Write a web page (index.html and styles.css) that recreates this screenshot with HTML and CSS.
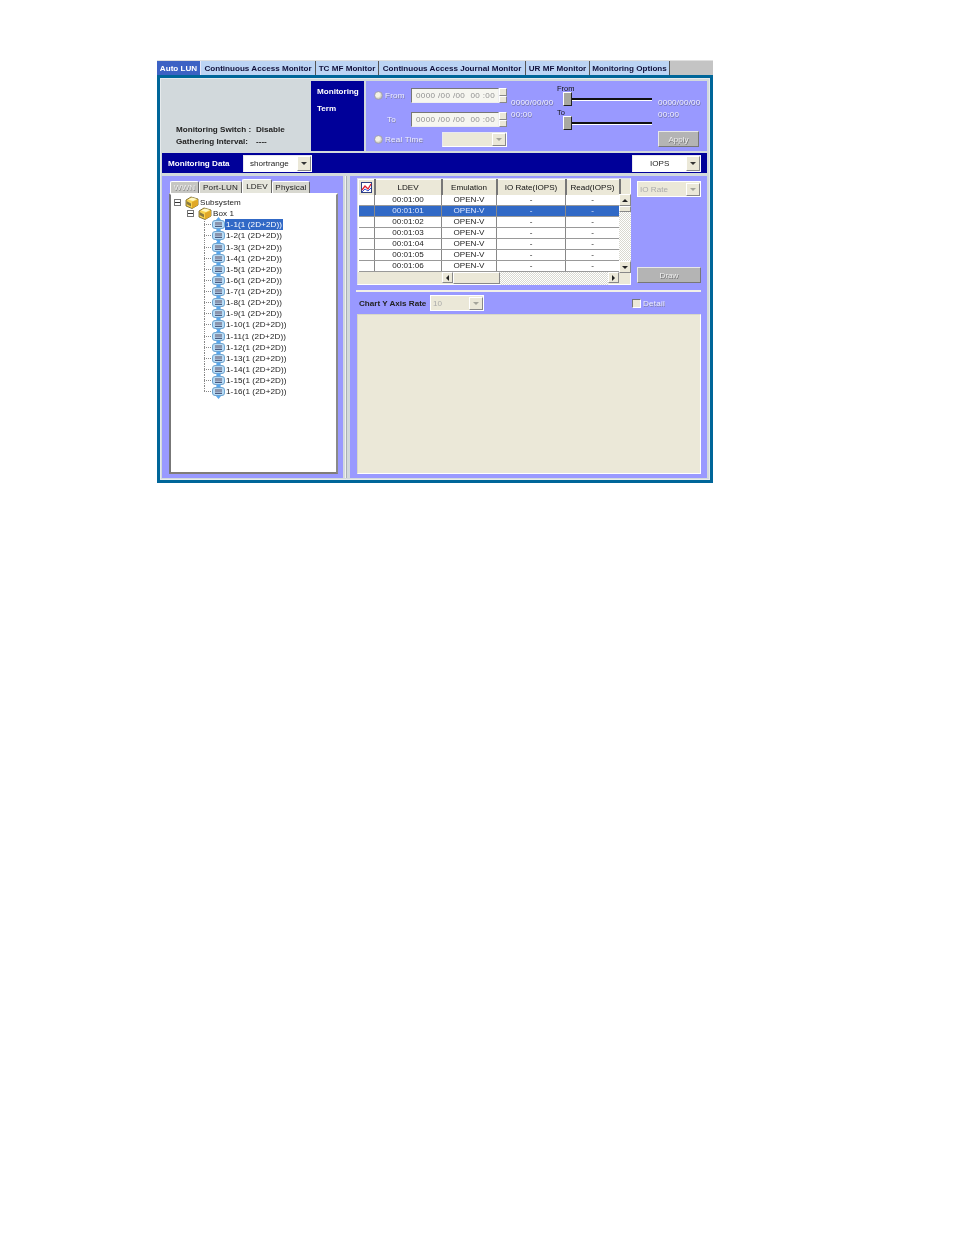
FILE: index.html
```html
<!DOCTYPE html>
<html lang="en">
<head>
<meta charset="utf-8">
<title>Auto LUN</title>
<link rel="stylesheet" href="styles.css">
</head>
<body>
<svg class="defs" width="0" height="0" aria-hidden="true">
  <symbol id="ldev" viewBox="0 0 13 15">
    <path d="M6.500 0 9.500 3.500H3.500ZM6.500 15 3.500 11.500H9.500Z" fill="#5aa8ee"/>
    <rect x=".5" y="3.500" width="12" height="8" rx="2.500" fill="#b8dcf6" stroke="#6ea4d0"/>
    <rect x="3" y="5" width="7" height="3.500" fill="#8a94ac"/>
    <rect x="3" y="9" width="7" height="1" fill="#4a5a80"/>
  </symbol>
  <symbol id="folder" viewBox="0 0 14 13">
    <path d="M1 4 6 1l7 2v6l-6 3.500L1 10Z" fill="#f6d24e" stroke="#6a5a20" stroke-width=".8"/>
    <path d="M3 3.500 7 1.500l5 1.500-4 2Z" fill="#fff8c4"/>
    <path d="M7 6l6-2.500v5.500l-6 3.500Z" fill="#e0a828"/>
    <path d="M1.500 5 6 7.500v3L1.500 8Z" fill="#8a7a40"/>
  </symbol>
</svg>
<main class="app">
  <nav class="tabs">
    <span class="tab tab-active tw-43">Auto LUN</span>
    <span class="tab tw-115">Continuous Access Monitor</span>
    <span class="tab tw-63">TC MF Monitor</span>
    <span class="tab tw-147">Continuous Access Journal Monitor</span>
    <span class="tab tw-64">UR MF Monitor</span>
    <span class="tab tw-80">Monitoring Options</span>
  </nav>
  <div class="frame">
    <section class="top">
      <div class="status">
        <div class="status-row"><span class="status-key">Monitoring Switch :</span><span>Disable</span></div>
        <div class="status-row"><span class="status-key">Gathering Interval:</span><span>----</span></div>
      </div>
      <div class="term"><span>Monitoring</span><span>Term</span></div>
      <div class="range">
        <div class="range-inputs">
          <div class="range-row">
            <span class="radio"></span><span class="muted label-from">From</span>
            <span class="field">0000 /00 /00&nbsp; 00 :00</span><span class="spin"><i></i><i></i></span>
          </div>
          <div class="range-row range-row-to">
            <span class="muted label-to">To</span>
            <span class="field">0000 /00 /00&nbsp; 00 :00</span><span class="spin"><i></i><i></i></span>
          </div>
          <div class="range-row range-row-rt">
            <span class="radio"></span><span class="muted label-rt">Real Time</span>
            <span class="combo combo-rt"><span class="combo-text"></span><span class="arrow arrow-off"></span></span>
          </div>
        </div>
        <div class="stamp"><span>0000/00/00</span><span>00:00</span></div>
        <div class="sliders">
          <span class="slider-label">From</span>
          <div class="slider"><span class="thumb"></span><span class="track"></span></div>
          <span class="slider-label slider-label-to">To</span>
          <div class="slider"><span class="thumb"></span><span class="track"></span></div>
        </div>
        <div class="range-end">
          <div class="stamp stamp-end"><span>0000/00/00</span><span>00:00</span></div>
          <span class="btn btn-apply">Apply</span>
        </div>
      </div>
    </section>

    <section class="databar">
      <span class="databar-title">Monitoring Data</span>
      <span class="combo combo-data"><span class="combo-text">shortrange</span><span class="arrow"></span></span>
      <span class="combo combo-iops"><span class="combo-text">IOPS</span><span class="arrow"></span></span>
    </section>

    <section class="lower">
      <div class="left">
        <div class="subtabs">
          <span class="subtab subtab-off sw-28">WWN</span>
          <span class="subtab sw-43">Port-LUN</span>
          <span class="subtab subtab-on sw-30">LDEV</span>
          <span class="subtab sw-38">Physical</span>
        </div>
        <div class="tree">
          <div class="node node-root"><span class="exp"></span><svg class="ico-folder"><use href="#folder"/></svg><span class="node-text">Subsystem</span></div>
          <div class="node node-box"><span class="exp"></span><svg class="ico-folder"><use href="#folder"/></svg><span class="node-text">Box 1</span></div>
          <div class="leaves">
            <div class="node"><span class="dash"></span><svg class="ico-ldev"><use href="#ldev"/></svg><span class="node-text node-sel">1-1(1 (2D+2D))</span></div>
            <div class="node"><span class="dash"></span><svg class="ico-ldev"><use href="#ldev"/></svg><span class="node-text">1-2(1 (2D+2D))</span></div>
            <div class="node"><span class="dash"></span><svg class="ico-ldev"><use href="#ldev"/></svg><span class="node-text">1-3(1 (2D+2D))</span></div>
            <div class="node"><span class="dash"></span><svg class="ico-ldev"><use href="#ldev"/></svg><span class="node-text">1-4(1 (2D+2D))</span></div>
            <div class="node"><span class="dash"></span><svg class="ico-ldev"><use href="#ldev"/></svg><span class="node-text">1-5(1 (2D+2D))</span></div>
            <div class="node"><span class="dash"></span><svg class="ico-ldev"><use href="#ldev"/></svg><span class="node-text">1-6(1 (2D+2D))</span></div>
            <div class="node"><span class="dash"></span><svg class="ico-ldev"><use href="#ldev"/></svg><span class="node-text">1-7(1 (2D+2D))</span></div>
            <div class="node"><span class="dash"></span><svg class="ico-ldev"><use href="#ldev"/></svg><span class="node-text">1-8(1 (2D+2D))</span></div>
            <div class="node"><span class="dash"></span><svg class="ico-ldev"><use href="#ldev"/></svg><span class="node-text">1-9(1 (2D+2D))</span></div>
            <div class="node"><span class="dash"></span><svg class="ico-ldev"><use href="#ldev"/></svg><span class="node-text">1-10(1 (2D+2D))</span></div>
            <div class="node"><span class="dash"></span><svg class="ico-ldev"><use href="#ldev"/></svg><span class="node-text">1-11(1 (2D+2D))</span></div>
            <div class="node"><span class="dash"></span><svg class="ico-ldev"><use href="#ldev"/></svg><span class="node-text">1-12(1 (2D+2D))</span></div>
            <div class="node"><span class="dash"></span><svg class="ico-ldev"><use href="#ldev"/></svg><span class="node-text">1-13(1 (2D+2D))</span></div>
            <div class="node"><span class="dash"></span><svg class="ico-ldev"><use href="#ldev"/></svg><span class="node-text">1-14(1 (2D+2D))</span></div>
            <div class="node"><span class="dash"></span><svg class="ico-ldev"><use href="#ldev"/></svg><span class="node-text">1-15(1 (2D+2D))</span></div>
            <div class="node"><span class="dash"></span><svg class="ico-ldev"><use href="#ldev"/></svg><span class="node-text">1-16(1 (2D+2D))</span></div>
          </div>
        </div>
      </div>
      <div class="divider"></div>
      <div class="right">
        <div class="right-top">
          <div class="grid">
            <div class="grid-main">
              <div class="table-clip">
              <table class="table">
                <colgroup><col class="c0"><col class="c1"><col class="c2"><col class="c3"><col class="c4"></colgroup>
                <thead>
                  <tr>
                    <th class="th-icon"><svg class="chart-ico" viewBox="0 0 11 11"><rect x=".5" y=".5" width="10" height="10" fill="#fff" stroke="#304080"/><path d="M1 8 4 4l3 3 3-5" fill="none" stroke="#e02030" stroke-width="1.300"/><path d="M1 10 4 7l3 2 3-3" fill="none" stroke="#3050d0"/></svg></th>
                    <th>LDEV</th><th>Emulation</th><th>IO Rate(IOPS)</th><th>Read(IOPS)</th>
                  </tr>
                </thead>
                <tbody>
                  <tr><td></td><td>00:01:00</td><td>OPEN-V</td><td>-</td><td>-</td></tr>
                  <tr class="row-sel"><td></td><td>00:01:01</td><td>OPEN-V</td><td>-</td><td>-</td></tr>
                  <tr><td></td><td>00:01:02</td><td>OPEN-V</td><td>-</td><td>-</td></tr>
                  <tr><td></td><td>00:01:03</td><td>OPEN-V</td><td>-</td><td>-</td></tr>
                  <tr><td></td><td>00:01:04</td><td>OPEN-V</td><td>-</td><td>-</td></tr>
                  <tr><td></td><td>00:01:05</td><td>OPEN-V</td><td>-</td><td>-</td></tr>
                  <tr><td></td><td>00:01:06</td><td>OPEN-V</td><td>-</td><td>-</td></tr>
                </tbody>
              </table>
              </div>
              <div class="hbar">
                <span class="sb-btn"><i class="tri tri-l"></i></span>
                <span class="sb-thumb-h"></span>
                <span class="sb-track"></span>
                <span class="sb-btn"><i class="tri tri-r"></i></span>
              </div>
            </div>
            <div class="vbar">
              <span class="sb-btn"><i class="tri tri-u"></i></span>
              <span class="sb-thumb-v"></span>
              <span class="sb-track"></span>
              <span class="sb-btn"><i class="tri tri-d"></i></span>
            </div>
          </div>
          <div class="side">
            <span class="combo combo-rate"><span class="combo-text">IO Rate</span><span class="arrow arrow-off"></span></span>
            <span class="btn btn-draw">Draw</span>
          </div>
        </div>
        <div class="rule"></div>
        <div class="chart-bar">
          <span class="chart-title">Chart Y Axis Rate</span>
          <span class="combo combo-axis"><span class="combo-text">10</span><span class="arrow arrow-off"></span></span>
          <span class="check"></span><span class="muted">Detail</span>
        </div>
        <div class="chart"></div>
      </div>
    </section>
  </div>
</main>
</body>
</html>
```
FILE: styles.css
```css
* { box-sizing: border-box; }
html, body { margin: 0; background: #fff; }
body { font: 8.1px/11px "Liberation Sans", Arial, sans-serif; color: #111; }
.defs { position: absolute; }
.app { width: 556px; margin: 60px 0 0 157px; filter: blur(.3px); }

/* main tabs */
.tabs { display: flex; height: 15px; background: #c4c4c4; border-top: 1px solid #e0e0e0; }
.tab { display: flex; align-items: center; justify-content: center; height: 14px; padding-top: 1px; background: #bcd4f4; border-right: 1px solid #555; font-weight: 700; color: #10103a; white-space: nowrap; }
.tab-active { background: #3c62c4; color: #fff; border-right: 1px solid #e8e8f8; padding-top: 0; }
.tw-43 { width: 44px; } .tw-115 { width: 115px; } .tw-63 { width: 63px; } .tw-147 { width: 147px; } .tw-64 { width: 64px; } .tw-80 { width: 80px; }

/* frame */
.frame { height: 408px; padding: 3px 3px 2px 2px; background: #d2d9dc; border: 3px solid #006699; box-shadow: inset 0 0 0 1px #e6eaec; }

/* top section */
.top { display: flex; height: 70px; }
.status { width: 149px; padding: 42px 0 0 14px; font-weight: 700; color: #222; }
.status-row { display: flex; height: 12px; align-items: center; white-space: nowrap; }
.status-key { width: 80px; }
.term { width: 53px; display: flex; flex-direction: column; gap: 6px; padding: 5px 0 0 6px; background: #000099; color: #fff; font-weight: 700; }
.range { display: flex; width: 341px; margin-left: 2px; background: #9999ff; color: #f0f0ff; }
.range-inputs { width: 145px; padding: 7px 0 0 8px; flex: none; }
.range-row { display: flex; align-items: center; height: 15px; }
.range-row-to { margin-top: 9px; }
.range-row-rt { margin-top: 4px; height: 16px; }
.radio { width: 9px; height: 9px; border-radius: 50%; background: radial-gradient(circle at 40% 40%, #f4f2e4 35%, #a8a698 90%); border: 1px solid #a0a0b8; flex: none; }
.muted { color: #eeeeff; text-shadow: .6px .6px 0 #8080a8; letter-spacing: .2px; white-space: nowrap; }
.label-from { width: 26px; margin-left: 2px; }
.label-to { width: 37px; padding-left: 13px; }
.label-rt { width: 57px; margin-left: 2px; }
.field { display: block; width: 88px; height: 15px; padding: 1px 0 0 4px; background: #f6f6f0; border: 1px solid #777; border-right-color: #eee; border-bottom-color: #eee; color: #909090; white-space: nowrap; letter-spacing: .35px; }
.spin { display: flex; flex-direction: column; width: 8px; height: 15px; }
.spin i { flex: 1; background: #ebe8d8; border: 1px solid #fff; border-right-color: #888; border-bottom-color: #888; }
.stamp { display: flex; flex-direction: column; gap: 1px; width: 46px; padding-top: 16px; flex: none; letter-spacing: .2px; text-shadow: .5px .5px 0 #7070a0; }
.sliders { width: 101px; padding-top: 4px; flex: none; color: #111; }
.slider-label { display: block; height: 7px; line-height: 7px; font-size: 7.500px; }
.slider-label-to { margin-top: 3px; }
.slider { display: flex; align-items: center; height: 14px; padding-left: 6px; }
.thumb { width: 9px; height: 14px; background: #a8a8a0; border: 1px solid #fff; border-right-color: #222; border-bottom-color: #222; }
.track { width: 80px; height: 2px; background: #111; border-bottom: 1px solid #fff; box-sizing: content-box; }
.range-end { width: 46px; display: flex; flex-direction: column; }
.stamp-end { height: 50px; }
.btn { display: flex; align-items: center; justify-content: center; background: #b4b4b4; border: 1px solid #e8e8e8; border-right-color: #777; border-bottom-color: #777; color: #eee; text-shadow: .6px .6px 0 #777; }
.btn-apply { width: 41px; height: 16px; }

/* combos */
.combo { display: flex; align-items: center; height: 17px; background: #fff; border: 1px solid #e8e8f0; border-right-color: #fff; border-bottom-color: #fff; }
.combo-text { flex: 1; white-space: nowrap; }
.arrow { display: flex; align-items: center; justify-content: center; width: 14px; height: 15px; background: #ebe8d8; border: 1px solid #fff; border-right-color: #888; border-bottom-color: #888; }
.arrow::after { content: ""; border: 3.500px solid transparent; border-top-color: #333; border-bottom-width: 0; }
.arrow-off::after { border-top-color: #a4a49a; }
.combo-rt { width: 65px; height: 15px; background: #ebe8d8; }
.combo-rt .arrow, .combo-rate .arrow, .combo-axis .arrow { height: 13px; }

/* data bar */
.databar { display: flex; align-items: center; height: 20px; margin-top: 2px; padding: 0 6px; background: #000099; }
.databar-title { width: 75px; color: #fff; font-weight: 700; white-space: nowrap; }
.combo-data { width: 69px; }
.combo-data .combo-text { padding-left: 6px; color: #222; }
.combo-iops { width: 69px; margin-left: auto; }
.combo-iops .combo-text { padding-left: 17px; color: #222; }

/* lower */
.lower { display: flex; height: 302px; margin-top: 3px; }
.left { width: 181px; padding: 4px 0 0 7px; background: #9999ff; }
.subtabs { display: flex; height: 13px; padding-left: 1px; align-items: flex-end; }
.subtab { display: flex; align-items: center; justify-content: center; height: 12px; background: #d8d8d0; border: 1px solid #fff; border-right-color: #666; border-bottom: 0; border-radius: 2px 2px 0 0; color: #222; letter-spacing: .15px; white-space: nowrap; }
.subtab-off { background: #c6c6c2; color: #eee; text-shadow: .6px .6px 0 #888; }
.subtab-on { height: 14px; background: #e6e6dc; }
.sw-28 { width: 29px; } .sw-43 { width: 43px; } .sw-30 { width: 30px; } .sw-38 { width: 38px; }
.tree { width: 169px; height: 281px; padding: 2px 0 0 3px; background: #fff; border: 2px solid #807c78; border-top-color: #fff; border-left-color: #777; border-right-color: #8a8a8a; letter-spacing: .1px; }
.node { display: flex; align-items: center; height: 11.130px; }
.node-text { padding: 0 1px; line-height: 11px; white-space: nowrap; color: #222; }
.node-sel { background: #3169c6; color: #fff; }
.exp { width: 7px; height: 7px; border: 1px solid #777; background: linear-gradient(#333,#333) center / 5px 1px no-repeat #fff; flex: none; }
.ico-folder { width: 14px; height: 13px; flex: none; margin-left: 4px; overflow: visible; }
.node-box { padding-left: 13px; }
.leaves { padding-left: 30px; }
.ico-ldev { width: 13px; height: 15px; flex: none; margin: -2px 0; overflow: visible; }
.dash { align-self: stretch; width: 8px; flex: none; background:
  repeating-linear-gradient(to bottom, #888 0 1px, transparent 1px 2px) left top / 1px 100% no-repeat,
  repeating-linear-gradient(to right, #888 0 1px, transparent 1px 2px) left 5px / 100% 1px no-repeat; }
.leaves .node:last-child .dash { background:
  repeating-linear-gradient(to bottom, #888 0 1px, transparent 1px 2px) left top / 1px 6px no-repeat,
  repeating-linear-gradient(to right, #888 0 1px, transparent 1px 2px) left 5px / 100% 1px no-repeat; }

.divider { width: 7px; background: linear-gradient(to right, #d2d9dc 0 2px, #f0f0f0 2px 3px, #a8b0b4 3px 4px, #d2d9dc 4px); }

/* right */
.right { width: 357px; padding: 2px 6px 0 7px; background: #9999ff; }
.right-top { display: flex; height: 107px; }
.grid { display: flex; width: 274px; height: 107px; background: #ebe8d8; border: 1px solid #dcdce8; border-right-color: #fff; border-bottom-color: #fff; flex: none; }
.grid-main { width: 261px; flex: none; }
.table-clip { height: 93px; background: #ebe8d8; }
.table { width: 261px; border-collapse: collapse; table-layout: fixed; background: #fff; }
.c0 { width: 16px; } .c1 { width: 67px; } .c2 { width: 55px; } .c3 { width: 69px; } .c4 { width: 54px; }
.table th { height: 15px; padding: 0; font-weight: 400; background: #ebe8d8; border-right: 2px solid #777; border-top: 1px solid #fff; border-left: 1px solid #fff; text-align: center; white-space: nowrap; overflow: hidden; }
.table td { height: 11px; padding: 0; text-align: center; border-right: 1px solid #888; border-bottom: 1px solid #999; line-height: 10px; color: #222; }
.chart-ico { display: block; width: 11px; height: 11px; margin: 1px auto 0; }
.row-sel td { background: #3169c6; color: #dfe8ff; }
.hbar { display: flex; height: 13px; padding-left: 84px; }
.sb-btn { display: flex; align-items: center; justify-content: center; width: 11px; height: 11px; flex: none; background: #ebe8d8; border: 1px solid #fff; border-right-color: #888; border-bottom-color: #888; }
.sb-thumb-h { width: 47px; height: 12px; background: #ebe8d8; border: 1px solid #fff; border-right-color: #888; border-bottom-color: #888; }
.sb-track { flex: 1; background: repeating-conic-gradient(#d8d8d0 0 25%, #fff 0 50%) 0 0 / 2px 2px; }
.vbar { display: flex; flex-direction: column; align-items: center; width: 12px; height: 79px; margin-top: 15px; }
.vbar .sb-btn { width: 12px; height: 12px; }
.sb-thumb-v { width: 12px; height: 6px; background: #ebe8d8; border: 1px solid #fff; border-right-color: #888; border-bottom-color: #888; }
.vbar .sb-track { width: 12px; }
.tri { display: block; border: 3px solid transparent; }
.tri-l { border-right-color: #222; border-left-width: 0; }
.tri-r { border-left-color: #222; border-right-width: 0; }
.tri-u { border-bottom-color: #222; border-top-width: 0; }
.tri-d { border-top-color: #222; border-bottom-width: 0; }
.side { display: flex; flex-direction: column; justify-content: space-between; width: 64px; height: 105px; margin-left: 6px; padding-top: 3px; }
.combo-rate { width: 64px; height: 16px; background: #ebe8d8; color: #aaa; padding-left: 2px; border-color: #fff; }
.btn-draw { width: 64px; height: 16px; }
.rule { height: 2px; margin: 5px 0 0 -1px; background: #f2f0e8; }
.chart-bar { display: flex; align-items: center; height: 16px; margin-top: 3px; padding-left: 2px; }
.chart-title { width: 71px; font-weight: 700; color: #222; white-space: nowrap; }
.combo-axis { width: 54px; height: 16px; background: #ebe8d8; color: #aaa; padding-left: 2px; border-color: #fff; }
.check { width: 9px; height: 9px; margin: 0 2px 0 148px; background: #ebe8d8; border: 1px solid #777; border-right-color: #fff; border-bottom-color: #fff; }
.chart { width: 344px; height: 160px; margin-top: 3px; background: #ebe8d8; border: 1px solid #d8d8c8; border-right-color: #fff; border-bottom-color: #fff; }
```
